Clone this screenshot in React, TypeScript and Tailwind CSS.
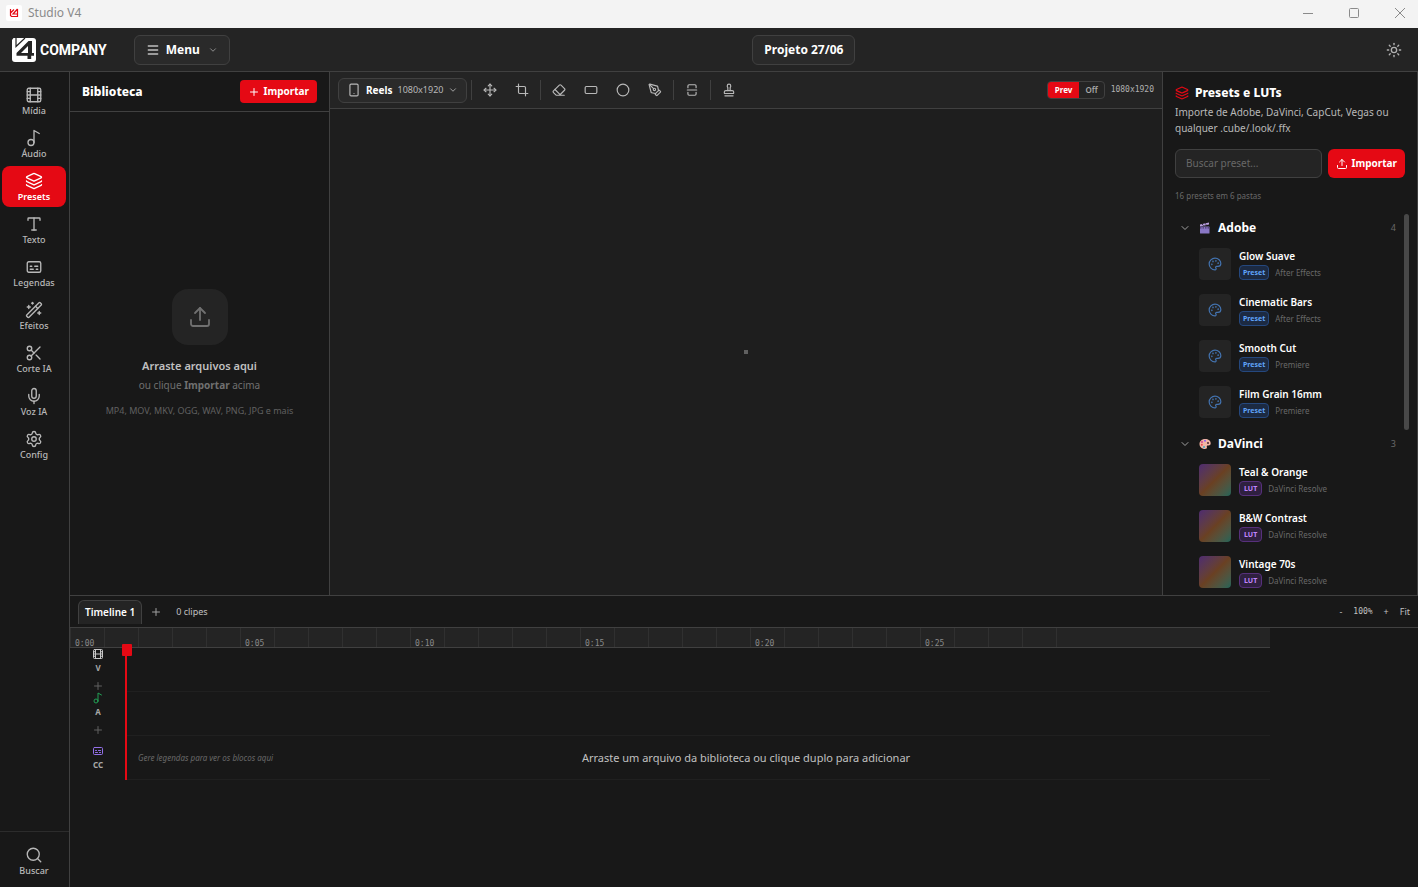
import {
  Captions,
  ChevronDown,
  Circle,
  Crop,
  Eraser,
  Film,
  Layers,
  Menu,
  Mic,
  Move,
  Music2,
  Palette,
  PenTool,
  Plus,
  RectangleHorizontal,
  Scissors,
  Search,
  Settings,
  Smartphone,
  SquareSplitVertical,
  Stamp,
  Sun,
  Type,
  Upload,
  WandSparkles,
} from 'lucide-react';

const navItems = [
  { label: 'Mídia', icon: Film },
  { label: 'Áudio', icon: Music2 },
  { label: 'Presets', icon: Layers, active: true },
  { label: 'Texto', icon: Type },
  { label: 'Legendas', icon: Captions },
  { label: 'Efeitos', icon: WandSparkles },
  { label: 'Corte IA', icon: Scissors },
  { label: 'Voz IA', icon: Mic },
  { label: 'Config', icon: Settings },
];

const toolGroups = [
  [
    { label: 'Mover', icon: Move },
    { label: 'Cortar', icon: Crop },
  ],
  [
    { label: 'Borracha', icon: Eraser },
    { label: 'Retângulo', icon: RectangleHorizontal },
    { label: 'Círculo', icon: Circle },
    { label: 'Caneta', icon: PenTool },
  ],
  [{ label: 'Dividir', icon: SquareSplitVertical }],
  [{ label: 'Carimbo', icon: Stamp }],
];

const folders = [
  {
    name: 'Adobe',
    icon: 'clapper',
    presets: [
      { name: 'Glow Suave', type: 'Preset', app: 'After Effects' },
      { name: 'Cinematic Bars', type: 'Preset', app: 'After Effects' },
      { name: 'Smooth Cut', type: 'Preset', app: 'Premiere' },
      { name: 'Film Grain 16mm', type: 'Preset', app: 'Premiere' },
    ],
  },
  {
    name: 'DaVinci',
    icon: 'palette',
    presets: [
      { name: 'Teal & Orange', type: 'LUT', app: 'DaVinci Resolve' },
      { name: 'B&W Contrast', type: 'LUT', app: 'DaVinci Resolve' },
      { name: 'Vintage 70s', type: 'LUT', app: 'DaVinci Resolve' },
    ],
  },
];

const tracks = [
  { label: 'V', icon: Film, color: 'shrink-0 text-[#c8c8c8]', canAdd: true },
  { label: 'A', icon: Music2, color: 'shrink-0 text-[#22a055]', canAdd: true },
  { label: 'CC', icon: Captions, color: 'shrink-0 text-[#9370e8]', canAdd: false },
];

const seconds = Array.from({ length: 30 }, (_, i) => i);

const AppIcon = () => (
  <svg viewBox="0 0 16 16" className="h-4 w-4">
    <rect width="16" height="16" rx="2" fill="#fff" />
    <path d="M4.500 4v6.500l1 1h6V9M4.500 8 8 4.500M11.500 4 7 9h4.500V4" fill="none" stroke="#e50914" strokeWidth="1.200" />
  </svg>
);

const LogoMark = () => (
  <svg viewBox="0 0 24 24" className="h-6 w-6">
    <path d="M1.500 0H21a3 3 0 0 1 3 3v18a3 3 0 0 1-3 3H3a3 3 0 0 1-3-3V2z" fill="#fff" />
    <path d="M4 0v8.500L13 0" fill="none" stroke="#242424" strokeWidth="1.200" />
    <path d="M20 3h-3.500L4.500 15v2.800H15.500V21h3.700v-3.200H22V15h-2z" fill="#242424" />
    <path d="M16 8v7H9z" fill="#fff" />
  </svg>
);

const ClapperIcon = () => (
  <svg viewBox="0 0 12 12" className="h-3 w-3">
    <path d="M1 2.500 10 .500v2L1 4.500z" fill="#b9a0dc" />
    <path d="m3 2 1.500 1.500M6 1.400l1.500 1.400" stroke="#3a2c50" strokeWidth="1" />
    <rect x="1" y="4.500" width="9.500" height="7" rx=".5" fill="#8876c4" />
    <path d="M1 5.800h9.500" stroke="#4b3a6b" strokeWidth="1.200" strokeDasharray="1.500 1" />
  </svg>
);

const PaletteIcon = () => (
  <svg viewBox="0 0 12 12" className="h-3 w-3">
    <path d="M6 1c3.500 0 5.700 1.800 5.700 4.300 0 1.800-1.200 2.400-2.700 2.200-1.200-.1-1.400.6-1.100 1.500.4 1.200-.5 2-1.900 2C2.700 11 .5 8.800.5 6S2.800 1 6 1z" fill="#f3b5a4" />
    <circle cx="3" cy="4" r="1" fill="#d9468f" />
    <circle cx="6" cy="2.800" r="1" fill="#8b5cf6" />
    <circle cx="2.800" cy="6.800" r="1" fill="#e5484d" />
    <circle cx="5" cy="9" r="1" fill="#3fa7c9" />
    <circle cx="9" cy="5" r="1" fill="#4a2630" />
  </svg>
);

const TitleBar = () => (
  <div className="flex h-7 shrink-0 items-center justify-between bg-[#f3f3f3] pr-3 pb-[3px] pl-1.5 text-[#8a8a8a]">
    <div className="flex items-center gap-1.5">
      <AppIcon />
      <span className="text-[12px]">Studio V4</span>
    </div>
    <div className="flex items-center gap-[34px]">
      <button aria-label="Minimizar">
        <svg viewBox="0 0 12 12" className="h-3 w-3"><path d="M1 6.500h10" stroke="currentColor" /></svg>
      </button>
      <button aria-label="Maximizar">
        <svg viewBox="0 0 12 12" className="h-3 w-3"><rect x="1.500" y="1.500" width="9" height="9" rx="1" fill="none" stroke="currentColor" /></svg>
      </button>
      <button aria-label="Fechar">
        <svg viewBox="0 0 12 12" className="h-3 w-3"><path d="m1 1 10 10M11 1 1 11" stroke="currentColor" /></svg>
      </button>
    </div>
  </div>
);

const Header = () => (
  <header className="flex h-11 shrink-0 items-center justify-between border-b border-[#404040] bg-[#242424] pr-2 pl-3">
    <div className="flex items-center gap-[27px]">
      <a href="#" className="flex items-center gap-1 text-white">
        <LogoMark />
        <span className="font-['Roboto',sans-serif] text-[14px] leading-6 font-bold">COMPANY</span>
      </a>
      <button className="flex h-[30px] items-center gap-1.5 rounded-md border border-[#404040] bg-[#2a2a2a] px-[11px] text-[12px] font-bold text-white">
        <Menu size={14} strokeWidth={2.5} className="text-[#c0c0c0]" />
        Menu
        <ChevronDown size={10} className="ml-0.5 text-[#a0a0a0]" />
      </button>
    </div>
    <button className="h-[30px] rounded-md border border-[#404040] bg-[#2a2a2a] px-[11px] text-[12px] font-bold text-white">
      Projeto 27/06
    </button>
    <button aria-label="Tema" className="flex w-8 justify-center text-[#b0b0b0]">
      <Sun size={16} />
    </button>
  </header>
);

const Sidebar = () => (
  <nav className="flex w-[70px] shrink-0 flex-col border-r border-[#404040] text-[9px] leading-3 font-medium text-[#b8b8b8]">
    <div className="flex flex-1 flex-col gap-0.5 py-2 pr-[3px] pl-0.5">
      {navItems.map(({ label, icon: Icon, active }) => (
        <button
          key={label}
          className={
            active
              ? 'flex h-[41px] flex-col items-center justify-center gap-px rounded-lg bg-[#e50914] pt-0.5 font-semibold text-white'
              : 'flex h-[41px] flex-col items-center justify-center gap-px rounded-lg pt-0.5'
          }
        >
          <Icon size={18} strokeWidth={1.8} />
          {label}
        </button>
      ))}
    </div>
    <button className="flex h-14 flex-col items-center justify-center gap-px border-t border-[#2c2c2c] pt-1 pr-px">
      <Search size={18} strokeWidth={1.8} />
      Buscar
    </button>
  </nav>
);

const Library = () => (
  <section className="flex w-[260px] shrink-0 flex-col border-r border-[#404040]">
    <div className="flex h-10 shrink-0 items-center justify-between border-b border-[#404040] px-3">
      <h2 className="text-[12px] font-extrabold text-white">Biblioteca</h2>
      <button className="flex h-[23px] items-center gap-1 rounded bg-[#e50914] px-2 text-[10px] font-bold text-white">
        <Plus size={12} />
        Importar
      </button>
    </div>
    <div className="flex flex-1 flex-col items-center justify-center text-center">
      <div className="flex h-14 w-14 items-center justify-center rounded-2xl bg-[#242424] text-[#707070]">
        <Upload size={24} strokeWidth={1.8} />
      </div>
      <p className="mt-3 text-[11px] leading-[18px] font-semibold text-[#c0c0c0]">Arraste arquivos aqui</p>
      <p className="mt-0.5 text-[10px] leading-4 text-[#707070]">
        ou clique <strong>Importar</strong> acima
      </p>
      <p className="mt-2.5 text-[9px] leading-4 text-[#606060]">MP4, MOV, MKV, OGG, WAV, PNG, JPG e mais</p>
    </div>
  </section>
);

const Preview = () => (
  <main className="flex min-w-0 flex-1 flex-col bg-[#1e1e1e]">
    <div className="flex h-[37px] shrink-0 items-center justify-between border-b border-[#404040] bg-[#242424] px-2">
      <div className="flex items-center">
        <button className="flex h-[25px] items-center gap-[5px] rounded-md border border-[#404040] bg-[#2a2a2a] px-2 text-[10px] text-[#b8b8b8]">
          <Smartphone size={14} />
          <span className="font-bold text-white">Reels</span>
          <span className="text-[9px]">1080x1920</span>
          <ChevronDown size={10} />
        </button>
        {toolGroups.map((group, i) => (
          <div key={i} className="ml-1 flex gap-1 border-l border-[#404040] pl-1 text-[#b8b8b8]">
            {group.map(({ label, icon: Icon }) => (
              <button key={label} aria-label={label} className="flex h-5 w-7 items-center justify-center">
                <Icon size={14} />
              </button>
            ))}
          </div>
        ))}
      </div>
      <div className="flex items-center gap-1.5">
        <div className="flex h-[18px] overflow-hidden rounded border border-[#404040] text-[8px]">
          <button className="bg-[#e50914] px-[7px] font-bold text-white">Prev</button>
          <button className="px-1.5 font-semibold text-[#a8a8a8]">Off</button>
        </div>
        <span className="font-['DejaVu_Sans_Mono',monospace] text-[8px] text-[#b0b0b0]">1080x1920</span>
      </div>
    </div>
    <div className="flex flex-1 items-center justify-center">
      <div className="h-1 w-1 bg-[#606060]" />
    </div>
  </main>
);

type Preset = { name: string; type: string; app: string };

const PresetRow = ({ preset }: { preset: Preset }) => (
  <li className="flex h-[46px] items-start gap-2 pt-1.5 pl-6">
    {preset.type === 'LUT' ? (
      <div className="h-8 w-8 rounded bg-linear-135 from-[#4f2a70] via-[#6a4022] to-[#1c6458]" />
    ) : (
      <div className="flex h-8 w-8 items-center justify-center rounded bg-[#242424] text-[#4373b0]">
        <Palette size={14} />
      </div>
    )}
    <div>
      <p className="text-[10px] leading-4 font-semibold text-white">{preset.name}</p>
      <div className="mt-px flex items-center gap-1.5">
        <span
          className={
            preset.type === 'LUT'
              ? 'h-[15px] rounded border border-[#57307c] bg-[#2f2040] px-1 text-[7px] leading-[13px] font-bold text-[#c084fc]'
              : 'h-[15px] rounded border border-[#25487e] bg-[#1c2a42] px-[3px] text-[7px] leading-[13px] font-bold text-[#60a5fa]'
          }
        >
          {preset.type}
        </span>
        <span className="text-[8px] leading-[15px] text-[#686868]">{preset.app}</span>
      </div>
    </div>
  </li>
);

const PresetsPanel = () => (
  <aside className="flex w-64 shrink-0 flex-col border-x border-[#404040] px-3 pt-[13px]">
    <h2 className="flex items-center gap-1.5 text-[12px] leading-4 font-extrabold text-white">
      <Layers size={14} className="text-[#e50914]" />
      Presets e LUTs
    </h2>
    <p className="mt-[3px] text-[10px] leading-4 text-[#b8b8b8]">
      Importe de Adobe, DaVinci, CapCut, Vegas ou qualquer .cube/.look/.ffx
    </p>
    <div className="mt-[13px] flex h-[29px] gap-1.5">
      <input
        type="text"
        aria-label="Buscar preset"
        placeholder="Buscar preset..."
        className="min-w-0 flex-1 rounded-md border border-[#404040] bg-[#242424] px-2.5 text-[10px] text-white placeholder:text-[#686868]"
      />
      <button className="flex items-center gap-1 rounded-md bg-[#e50914] px-2 text-[10px] font-bold text-white">
        <Upload size={12} />
        Importar
      </button>
    </div>
    <p className="mt-3 text-[8px] leading-3 text-[#686868]">16 presets em 6 pastas</p>
    <div className="mt-3 flex min-h-0 flex-1">
      <div className="min-h-0 flex-1 overflow-hidden">
        {folders.map((folder) => (
          <div key={folder.name} className="mb-1">
            <button className="flex h-7 w-full items-center pr-2 pl-1 text-[12px] font-bold text-white">
              <ChevronDown size={12} className="mr-2 text-[#a0a0a0]" />
              {folder.icon === 'clapper' ? <ClapperIcon /> : <PaletteIcon />}
              <span className="ml-[7px]">{folder.name}</span>
              <span className="ml-auto text-[9px] font-normal text-[#686868]">{folder.presets.length}</span>
            </button>
            <ul>
              {folder.presets.map((preset) => (
                <PresetRow key={preset.name} preset={preset} />
              ))}
            </ul>
          </div>
        ))}
      </div>
      <div className="-mr-1 h-[216px] w-[5px] rounded-full bg-[#484848]" />
    </div>
  </aside>
);

const Timeline = () => (
  <section className="flex h-[292px] shrink-0 flex-col border-t border-[#404040]">
    <div className="flex h-8 shrink-0 items-center justify-between border-b border-[#404040] px-2 text-[9px] text-[#c0c0c0]">
      <div className="flex items-center">
        <button className="h-6 rounded-t-md border border-b-0 border-[#404040] bg-[#242424] px-1.5 text-[10px] font-semibold text-white">
          Timeline 1
        </button>
        <button aria-label="Nova timeline" className="ml-2 text-[#a0a0a0]">
          <Plus size={12} />
        </button>
        <span className="ml-3.5">0 clipes</span>
      </div>
      <div className="flex items-center gap-[11px]">
        <button aria-label="Diminuir zoom">-</button>
        <span className="font-['DejaVu_Sans_Mono',monospace] text-[8px]">100%</span>
        <button aria-label="Aumentar zoom">+</button>
        <button>Fit</button>
      </div>
    </div>
    <div className="relative min-h-0 flex-1 overflow-hidden">
      <div className="w-[1200px]">
        <div className="flex h-5 border-b border-[#404040] bg-[#242424]">
          {seconds.map((s) => (
            <div
              key={s}
              className="flex w-[34px] shrink-0 items-end border-l border-[#303030] pl-1 font-['DejaVu_Sans_Mono',monospace] text-[8px] leading-[6px] text-[#8a8a8a]"
            >
              {s % 5 === 0 && `0:${String(s).padStart(2, '0')}`}
            </div>
          ))}
        </div>
        {tracks.map(({ label, icon: Icon, color, canAdd }) => (
          <div key={label} className="flex h-11">
            <div className="flex w-14 flex-col items-center justify-center gap-0.5 text-[8px] leading-3 font-bold text-[#a8a8a8]">
              <Icon size={12} className={color} />
              {label}
              {canAdd && (
                <button aria-label={`Adicionar faixa ${label}`} className="pt-1 text-[#606060]">
                  <Plus size={12} />
                </button>
              )}
            </div>
            <div className="flex flex-1 items-center border-b border-[#202020] pl-3 text-[8px] text-[#686868] italic">
              {label === 'CC' && 'Gere legendas para ver os blocos aqui'}
            </div>
          </div>
        ))}
      </div>
      {/* Playhead */}
      <div className="absolute top-4 left-[52px] flex h-[136px] w-2.5 flex-col items-center">
        <div className="h-3 w-2.5 rounded-[1px] bg-[#e50914]" />
        <div className="mr-0.5 w-0.5 flex-1 bg-[#e50914]" />
      </div>
      <div className="pointer-events-none absolute inset-0 flex items-center justify-center pt-0.5 pl-1 text-[11px] text-[#c0c0c0]">
        Arraste um arquivo da biblioteca ou clique duplo para adicionar
      </div>
    </div>
  </section>
);

const App = () => {
  return (
    <div className="flex h-screen flex-col overflow-hidden bg-[#181818] font-['Noto_Sans',sans-serif]">
      <TitleBar />
      <Header />
      <div className="flex min-h-0 flex-1">
        <Sidebar />
        <div className="flex min-w-0 flex-1 flex-col">
          <div className="flex min-h-0 flex-1">
            <Library />
            <Preview />
            <PresetsPanel />
          </div>
          <Timeline />
        </div>
      </div>
    </div>
  );
};

export default App;
